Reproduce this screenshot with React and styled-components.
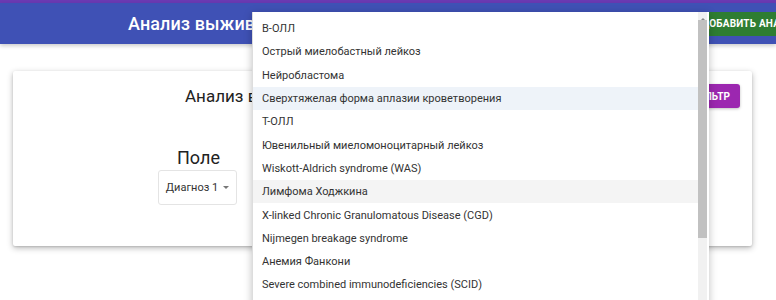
import React from "react";
import styled, { createGlobalStyle } from "styled-components";

const GlobalStyle = createGlobalStyle`
  html, body {
    margin: 0;
    padding: 0;
    background: #ffffff;
    font-family: Roboto, "Liberation Sans", Arial, sans-serif;
    overflow: hidden;
  }
`;

const diagnoses = [
  "В-ОЛЛ",
  "Острый миелобастный лейкоз",
  "Нейробластома",
  "Сверхтяжелая форма аплазии кроветворения",
  "Т-ОЛЛ",
  "Ювенильный миеломоноцитарный лейкоз",
  "Wiskott-Aldrich syndrome (WAS)",
  "Лимфома Ходжкина",
  "X-linked Chronic Granulomatous Disease (CGD)",
  "Nijmegen breakage syndrome",
  "Анемия Фанкони",
  "Severe combined immunodeficiencies (SCID)",
  "Другое",
];

const App = () => {
  return (
    <Page>
      <GlobalStyle />
      <TopStrip />
      <Header>
        <Title>Анализ выживаемости</Title>
        <AddButton>Добавить анализ</AddButton>
      </Header>

      <Card>
        <CardHead>
          <CardTitle>Анализ выживаемости пациентов</CardTitle>
          <FilterButton>Фильтр</FilterButton>
        </CardHead>
        <FieldBlock>
          <FieldLabel>Поле</FieldLabel>
          <SelectBox>
            Диагноз 1
            <Caret />
          </SelectBox>
        </FieldBlock>
      </Card>

      <Menu>
        <MenuList>
          {diagnoses.map((d, i) => (
            <MenuItem key={i} $state={i === 3 ? "focus" : i === 7 ? "hover" : null}>
              {d}
            </MenuItem>
          ))}
        </MenuList>
        <ScrollTrack>
          <ScrollArrow />
          <ScrollThumb />
        </ScrollTrack>
      </Menu>
    </Page>
  );
};

const Page = styled.div`
  position: relative;
  width: 776px;
  height: 300px;
  overflow: hidden;
  background: #fff;
`;

const TopStrip = styled.div`
  height: 3px;
  background: #6a3ab2;
`;

const Header = styled.header`
  height: 41px;
  background: #3f51b5;
  display: flex;
  align-items: center;
  justify-content: space-between;
  padding-left: 128px;
  box-shadow: 0 2px 4px rgba(0, 0, 0, 0.2);
`;

const Title = styled.h1`
  margin: 0;
  color: #fff;
  font-size: 18px;
  font-weight: 500;
  letter-spacing: 0.1px;
`;

const AddButton = styled.button`
  height: 24px;
  margin-right: -37px;
  padding: 0 12px;
  border: none;
  border-radius: 3px;
  background: #2e7d32;
  color: #fff;
  font-family: Roboto, "Liberation Sans", Arial, sans-serif;
  font-size: 10px;
  font-weight: 700;
  text-transform: uppercase;
  letter-spacing: 0.2px;
`;

const Card = styled.section`
  margin: 27px 24px 0 13px;
  height: 175px;
  background: #fff;
  border-radius: 2px;
  box-shadow: 0 2px 6px rgba(0, 0, 0, 0.28), 0 1px 2px rgba(0, 0, 0, 0.12);
  display: flex;
  flex-direction: column;
`;

const CardHead = styled.div`
  display: flex;
  align-items: center;
  justify-content: space-between;
  padding: 13px 12px 0 172px;
  height: 24px;
`;

const CardTitle = styled.h2`
  margin: 0;
  font-size: 17px;
  font-weight: 400;
  color: #222;
`;

const FilterButton = styled.button`
  height: 24px;
  padding: 0 10px;
  border: none;
  border-radius: 3px;
  background: #9c27b0;
  color: #fff;
  font-family: Roboto, "Liberation Sans", Arial, sans-serif;
  font-size: 10px;
  font-weight: 700;
  text-transform: uppercase;
  box-shadow: 0 1px 3px rgba(0, 0, 0, 0.25);
`;

const FieldBlock = styled.div`
  display: flex;
  flex-direction: column;
  align-items: center;
  width: 79px;
  margin: 40px 0 0 145px;
`;

const FieldLabel = styled.div`
  font-size: 18px;
  color: #222;
  line-height: 20px;
  margin-left: 2px;
`;

const SelectBox = styled.div`
  box-sizing: border-box;
  width: 79px;
  height: 35px;
  margin-top: 2px;
  border: 1px solid #e4e4e4;
  border-radius: 3px;
  display: flex;
  align-items: center;
  justify-content: center;
  gap: 5px;
  font-size: 11px;
  color: #333;
`;

const Caret = styled.span`
  width: 0;
  height: 0;
  border-left: 3px solid transparent;
  border-right: 3px solid transparent;
  border-top: 3px solid #777;
`;

const Menu = styled.div`
  position: absolute;
  left: 252px;
  top: 12px;
  width: 456px;
  height: 300px;
  background: #fff;
  display: flex;
  box-shadow: 0 2px 8px rgba(0, 0, 0, 0.25);
  border-left: 1px solid #ddd;
`;

const MenuList = styled.ul`
  list-style: none;
  margin: 0;
  padding: 5px 0 0;
  flex: 1;
`;

const MenuItem = styled.li`
  height: 23.3px;
  display: flex;
  align-items: center;
  padding-left: 9px;
  font-size: 11px;
  color: #333;
  background: ${(p) =>
    p.$state === "focus" ? "#eef3f9" : p.$state === "hover" ? "#f4f4f4" : "transparent"};
`;

const ScrollTrack = styled.div`
  width: 9px;
  margin-right: 2px;
  display: flex;
  flex-direction: column;
  background: #f1f1f1;
`;

const ScrollArrow = styled.div`
  height: 6px;
  margin-top: 2px;
  display: flex;
  justify-content: center;
  &::before {
    content: "";
    margin-top: 2px;
    border-left: 2px solid transparent;
    border-right: 2px solid transparent;
    border-bottom: 2px solid #888;
  }
`;

const ScrollThumb = styled.div`
  height: 218px;
  background: #c1c1c1;
`;

export default App;
